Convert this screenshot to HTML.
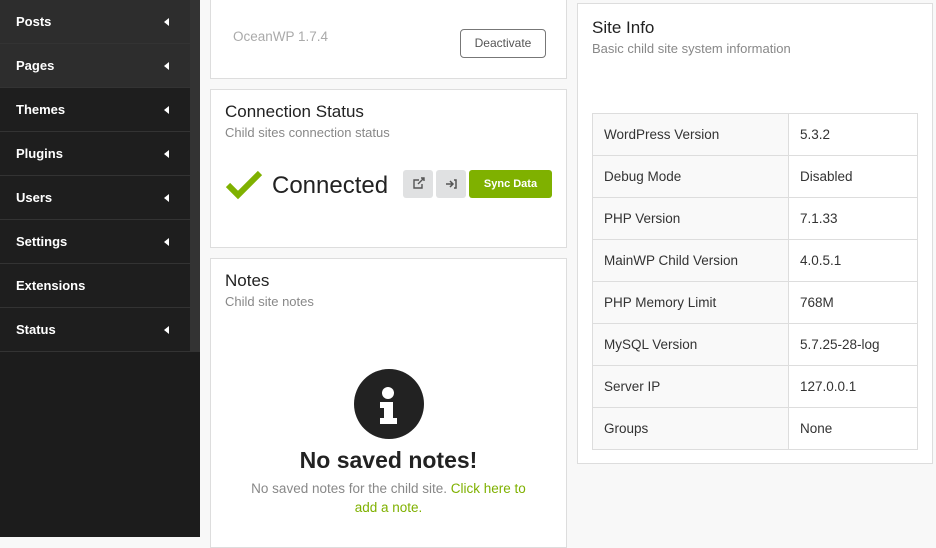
<!DOCTYPE html>
<html><head><style>
*{margin:0;padding:0;box-sizing:border-box}
body{width:936px;height:537px;overflow:hidden;background:#f8f8f8;font-family:"Liberation Sans",sans-serif;position:relative}
.sb{position:absolute;left:0;top:0;width:200px;height:537px;background:#1c1c1c}
.sb .track{position:absolute;left:190px;top:0;width:10px;height:352px;background:#333}
.it{position:absolute;left:0;width:190px;height:44px;border-bottom:1px solid #333;color:#fff;font-weight:bold;font-size:13px;line-height:44px;padding-left:16px;background:#1e1e1e}
.it.l{background:#2d2d2d}
.it .a{position:absolute;left:164px;top:18px;width:0;height:0;border-top:4px solid transparent;border-bottom:4px solid transparent;border-right:5px solid #fff}
.card{position:absolute;background:#fff;border:1px solid #ddd}
.t{font-size:17px;color:#222;position:absolute}
.s{font-size:13px;color:#888;position:absolute}
table{border-collapse:collapse;position:absolute;left:592px;top:113px;width:326px;font-size:13.5px;color:#333}
td{border:1px solid #ddd;height:42px;padding-left:11px}
td:first-child{background:#f9f9f9;width:196px}
</style></head><body>
<div class="sb"><div class="track"></div>
<div class="it l" style="top:0">Posts<span class="a"></span></div>
<div class="it l" style="top:44px">Pages<span class="a"></span></div>
<div class="it" style="top:88px">Themes<span class="a"></span></div>
<div class="it" style="top:132px">Plugins<span class="a"></span></div>
<div class="it" style="top:176px">Users<span class="a"></span></div>
<div class="it" style="top:220px">Settings<span class="a"></span></div>
<div class="it" style="top:264px">Extensions</div>
<div class="it" style="top:308px">Status<span class="a"></span></div>
</div>

<div class="card" style="left:210px;top:-2px;width:357px;height:81px">
<div style="position:absolute;left:22px;top:30px;font-size:13.5px;color:#aaa">OceanWP 1.7.4</div>
<div style="position:absolute;left:249px;top:30px;width:86px;height:29px;border:1px solid #777;border-radius:4px;font-size:12px;color:#555;text-align:center;line-height:27px">Deactivate</div>
</div>

<div class="card" style="left:210px;top:89px;width:357px;height:159px">
<div class="t" style="left:14px;top:12px">Connection Status</div>
<div class="s" style="left:14px;top:35px">Child sites connection status</div>
<svg style="position:absolute;left:14px;top:80px" width="38" height="30" viewBox="0 0 38 30"><path d="M3 15 L13 25 L35 3" fill="none" stroke="#7fb100" stroke-width="6"/></svg>
<div style="position:absolute;left:61px;top:82px;font-size:24px;color:#222">Connected</div>
<div style="position:absolute;left:192px;top:80px;width:30px;height:28px;background:#e0e1e2;border-radius:3px"><svg width="30" height="28" viewBox="0 0 30 28"><path d="M16 10h-5v8h8v-4M15 14l6-6M18 8h3v3" fill="none" stroke="#555" stroke-width="1.4"/></svg></div>
<div style="position:absolute;left:225px;top:80px;width:30px;height:28px;background:#e0e1e2;border-radius:3px"><svg width="30" height="28" viewBox="0 0 30 28"><path d="M10 14h7M14 11l3 3-3 3M18 10h2v8h-2" fill="none" stroke="#555" stroke-width="1.5"/></svg></div>
<div style="position:absolute;left:258px;top:80px;width:83px;height:28px;background:#7fb100;border-radius:3px;color:#fff;font-weight:bold;font-size:11px;text-align:center;line-height:28px">Sync Data</div>
</div>

<div class="card" style="left:210px;top:258px;width:357px;height:290px">
<div class="t" style="left:14px;top:12px">Notes</div>
<div class="s" style="left:14px;top:35px">Child site notes</div>
<svg style="position:absolute;left:142px;top:109px" width="72" height="72" viewBox="0 0 72 72"><circle cx="36" cy="36" r="35" fill="#222"/><circle cx="35" cy="25" r="6" fill="#fff"/><path d="M27 34h13v16h4v6H27v-6h4v-10h-4z" fill="#fff"/></svg>
<div style="position:absolute;left:0;width:355px;top:188px;text-align:center;font-size:23px;font-weight:bold;color:#222">No saved notes!</div>
<div style="position:absolute;left:10px;width:335px;top:220px;text-align:center;font-size:13.5px;color:#888;line-height:19px">No saved notes for the child site. <span style="color:#7fb100">Click here to<br>add a note.</span></div>
</div>

<div class="card" style="left:577px;top:3px;width:356px;height:461px">
<div class="t" style="left:14px;top:14px">Site Info</div>
<div class="s" style="left:14px;top:37px">Basic child site system information</div>
</div>
<table>
<tr><td>WordPress Version</td><td>5.3.2</td></tr>
<tr><td>Debug Mode</td><td>Disabled</td></tr>
<tr><td>PHP Version</td><td>7.1.33</td></tr>
<tr><td>MainWP Child Version</td><td>4.0.5.1</td></tr>
<tr><td>PHP Memory Limit</td><td>768M</td></tr>
<tr><td>MySQL Version</td><td>5.7.25-28-log</td></tr>
<tr><td>Server IP</td><td>127.0.0.1</td></tr>
<tr><td>Groups</td><td>None</td></tr>
</table>
</body></html>
